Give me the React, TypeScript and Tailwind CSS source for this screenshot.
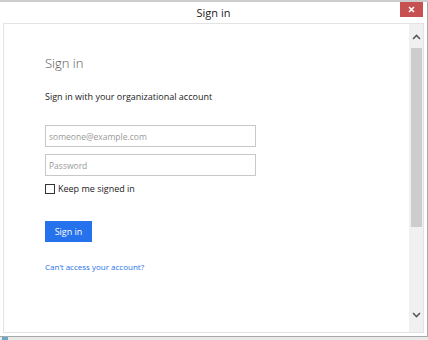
import { useState } from "react";

function Chevron({ dir }: { dir: "up" | "down" }) {
  return (
    <svg width="9" height="6" viewBox="0 0 9 6" className="text-[#5a5a5a]">
      <polyline
        points={dir === "up" ? "1,5 4.5,1.5 8,5" : "1,1 4.5,4.5 8,1"}
        fill="none"
        stroke="currentColor"
        strokeWidth="1.6"
      />
    </svg>
  );
}

export default function App() {
  const [keep, setKeep] = useState(false);

  return (
    <div className="flex h-[340px] w-[428px] flex-col overflow-hidden bg-white font-['Open_Sans','Noto_Sans',sans-serif]">
      <div className="h-[2px] shrink-0 bg-[#cdcdcd]" />
      <div className="flex min-h-0 flex-1 flex-col border-r border-[#a9a9a9]">
        {/* title bar */}
        <div className="relative flex h-[21px] shrink-0 items-center justify-center">
          <span className="text-[11px] leading-none text-[#222]">Sign in</span>
          <button className="absolute right-[4px] top-0 flex h-[15px] w-[23px] items-center justify-center bg-[#c75050]">
            <svg width="7" height="7" viewBox="0 0 7 7">
              <path d="M1 1L6 6M6 1L1 6" stroke="#fff" strokeWidth="1.6" />
            </svg>
          </button>
        </div>

        {/* framed page */}
        <div className="mx-[3px] flex h-[310px] shrink-0 border border-[#e3e3e3]">
          <div className="flex min-w-0 flex-1 flex-col items-start pl-[41px] pt-[30px]">
            <h1 className="text-[13px] font-light leading-[18px] text-[#555]">Sign in</h1>
            <p className="mt-[19px] text-[9px] leading-[12px] text-[#222]">
              Sign in with your organizational account
            </p>
            <input
              className="mt-[22px] h-[22px] w-[211px] border border-[#c8c8c8] px-[3px] text-[8.5px] text-[#222] outline-none placeholder:text-[#9a9a9a]"
              placeholder="someone@example.com"
            />
            <input
              type="password"
              className="mt-[7px] h-[22px] w-[211px] border border-[#c8c8c8] px-[3px] text-[8.5px] text-[#222] outline-none placeholder:text-[#9a9a9a]"
              placeholder="Password"
            />
            <label className="mt-[7px] flex items-center gap-[3px] text-[9px] leading-[12px] text-[#222]">
              <span
                onClick={() => setKeep(!keep)}
                className="flex h-[10px] w-[10px] items-center justify-center border border-[#333] bg-white"
              >
                {keep ? <span className="h-[4px] w-[4px] bg-[#333]" /> : null}
              </span>
              Keep me signed in
            </label>
            <button className="mt-[26px] h-[21px] w-[47px] bg-[#2672ec] text-[9px] leading-none text-white">
              Sign in
            </button>
            <a href="#" className="mt-[19px] text-[8px] leading-[12px] text-[#2672ec]">
              Can’t access your account?
            </a>
          </div>

          {/* scrollbar */}
          <div className="flex w-[14px] shrink-0 flex-col items-center bg-[#f0f0f0]">
            <div className="flex h-[24px] items-center justify-center pt-[2px]">
              <Chevron dir="up" />
            </div>
            <div className="h-[179px] w-[11px] bg-[#cdcdcd]" />
            <div className="flex-1" />
            <div className="flex h-[28px] items-start justify-center pt-[8px]">
              <Chevron dir="down" />
            </div>
          </div>
        </div>
        <div className="flex-1" />
      </div>
      <div className="h-px shrink-0 bg-[#a9a9a9]" />
      <div className="flex h-[3px] shrink-0 items-end bg-[#e9e9e9] pl-[2px]">
        <span className="h-[3px] w-[6px] bg-[#6aa7c9]" />
      </div>
    </div>
  );
}
